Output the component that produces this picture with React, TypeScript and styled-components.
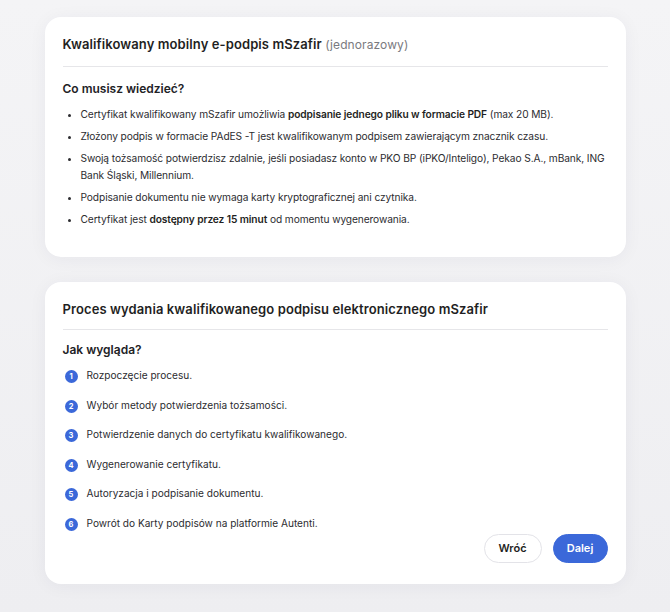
import React from "react";
import styled, { createGlobalStyle } from "styled-components";

const GlobalStyle = createGlobalStyle`
    html, body {
        margin: 0;
        padding: 0;
    }
    body {
        background: linear-gradient(180deg, #f4f4f6 0%, #eeeef1 100%);
        min-height: 612px;
        font-family: Inter, "Noto Sans", "Liberation Sans", sans-serif;
        color: #2a2a2e;
    }
`;

const steps = [
    "Rozpoczęcie procesu.",
    "Wybór metody potwierdzenia tożsamości.",
    "Potwierdzenie danych do certyfikatu kwalifikowanego.",
    "Wygenerowanie certyfikatu.",
    "Autoryzacja i podpisanie dokumentu.",
    "Powrót do Karty podpisów na platformie Autenti.",
];

export default function App() {
    return (
        <>
            <GlobalStyle />
            <Page>
                <Card>
                    <CardTitle>
                        Kwalifikowany mobilny e-podpis mSzafir <Muted>(jednorazowy)</Muted>
                    </CardTitle>
                    <Divider />
                    <SectionLabel>Co musisz wiedzieć?</SectionLabel>
                    <BulletList>
                        <li>
                            Certyfikat kwalifikowany mSzafir umożliwia{" "}
                            <b>podpisanie jednego pliku w formacie PDF</b> (max 20 MB).
                        </li>
                        <li>
                            Złożony podpis w formacie PAdES -T jest kwalifikowanym podpisem
                            zawierającym znacznik czasu.
                        </li>
                        <li>
                            Swoją tożsamość potwierdzisz zdalnie, jeśli posiadasz konto w PKO BP
                            (iPKO/Inteligo), Pekao S.A., mBank, ING Bank Śląski, Millennium.
                        </li>
                        <li>Podpisanie dokumentu nie wymaga karty kryptograficznej ani czytnika.</li>
                        <li>
                            Certyfikat jest <b>dostępny przez 15 minut</b> od momentu wygenerowania.
                        </li>
                    </BulletList>
                </Card>

                <Card>
                    <CardTitle>
                        Proces wydania kwalifikowanego podpisu elektronicznego mSzafir
                    </CardTitle>
                    <Divider $tight />
                    <SectionLabel>Jak wygląda?</SectionLabel>
                    <StepList>
                        {steps.map((s, i) => (
                            <Step key={s}>
                                <StepNum>{i + 1}</StepNum>
                                {s}
                            </Step>
                        ))}
                    </StepList>
                    <Actions>
                        <Button $width={58}>Wróć</Button>
                        <Button $primary $width={55}>
                            Dalej
                        </Button>
                    </Actions>
                </Card>
            </Page>
        </>
    );
}

const Page = styled.div`
    width: 581px;
    margin: 0 auto;
    padding: 17px 0 29px;
    display: flex;
    flex-direction: column;
    gap: 25px;
`;

const Card = styled.section`
    box-sizing: border-box;
    background: #fff;
    border-radius: 16px;
    box-shadow: 0 2px 18px rgba(40, 40, 70, 0.05);
    padding: 18px 18px 17px;
`;

const CardTitle = styled.h2`
    margin: 0;
    font-size: 13px;
    font-weight: 600;
    line-height: 18px;
    color: #1f1f23;
    letter-spacing: 0.1px;
`;

const Muted = styled.span`
    font-weight: 400;
    color: #7a7a80;
    font-size: 12px;
`;

const Divider = styled.hr<{ $tight?: boolean }>`
    border: 0;
    border-top: 1px solid #e6e6e9;
    margin: ${(p) => (p.$tight ? "11px 0 11px" : "12px 0 13px")};
`;

const SectionLabel = styled.h3`
    margin: 0 0 9px;
    font-size: 12px;
    font-weight: 600;
    line-height: 17px;
    color: #222226;
`;

const BulletList = styled.ul`
    margin: 0;
    padding-left: 18px;
    font-size: 10.2px;
    letter-spacing: -0.1px;
    line-height: 17px;
    color: #2c2c30;
    display: flex;
    flex-direction: column;
    gap: 5px;
    padding-bottom: 12px;

    b {
        font-weight: 600;
        color: #1f1f23;
    }
    li::marker {
        font-size: 10px;
    }
`;

const StepList = styled.ol`
    list-style: none;
    margin: 0;
    padding: 0;
    display: flex;
    flex-direction: column;
    gap: 12.6px;
`;

const Step = styled.li`
    display: flex;
    align-items: center;
    gap: 9px;
    font-size: 10.1px;
    line-height: 17px;
    color: #2c2c30;
    padding-left: 2px;
`;

const StepNum = styled.span`
    flex: none;
    width: 13px;
    height: 13px;
    border-radius: 50%;
    background: #3b68d9;
    color: #fff;
    font-size: 7.5px;
    font-weight: 700;
    display: flex;
    align-items: center;
    justify-content: center;
    margin-top: 2px;
`;

const Actions = styled.div`
    display: flex;
    justify-content: flex-end;
    gap: 11px;
    margin: 2px 0 4px;
`;

const Button = styled.button<{ $primary?: boolean; $width: number }>`
    width: ${(p) => p.$width}px;
    height: 29px;
    padding: 0;
    border-radius: 15px;
    font-family: Inter, "Noto Sans", sans-serif;
    font-size: 11px;
    font-weight: 600;
    cursor: pointer;
    border: 1px solid ${(p) => (p.$primary ? "#3b68d9" : "#e3e3e8")};
    background: ${(p) => (p.$primary ? "#3b68d9" : "#fff")};
    color: ${(p) => (p.$primary ? "#fff" : "#1f1f23")};
`;
